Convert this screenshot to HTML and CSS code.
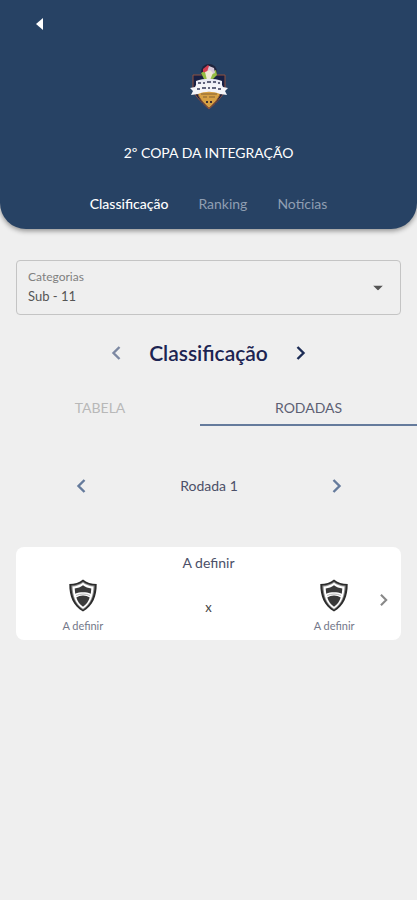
FILE: index.html
```
<!DOCTYPE html>
<html lang="pt-BR">
<head>
  <meta charset="UTF-8" />
  <meta name="viewport" content="width=device-width, initial-scale=1" />
  <title>2º Copa da Integração</title>
  <link rel="stylesheet" href="styles.css">
</head>
<body>
  <svg class="symbols" aria-hidden="true">
    <symbol id="chevron-left" viewBox="0 0 10 16">
      <path d="M8.5 2 L2.5 8 L8.5 14" fill="none" stroke="currentColor" stroke-width="2.4" />
    </symbol>
    <symbol id="chevron-right" viewBox="0 0 10 16">
      <path d="M1.5 2 L7.5 8 L1.5 14" fill="none" stroke="currentColor" stroke-width="2.4" />
    </symbol>
    <symbol id="shield" viewBox="0 0 28 33">
      <path d="M14 .5 C10.500 3.500 5.500 5 .3 5 C.2 17 4 27 14 32.500 C24 27 27.800 17 27.700 5 C22.500 5 17.500 3.500 14 .5z" fill="#2b2b2b" />
      <path d="M14 2.500 C11 5 7 6.300 2.300 6.600 C2.600 16 5.500 25.500 14 30.700 C22.500 25.500 25.400 16 25.700 6.600 C21 6.300 17 5 14 2.500z" fill="#8d8d8d" />
      <path d="M14 3.800 C11 6 7.500 7.300 3.500 7.600 C3.800 16.500 6.500 25 14 29.700 C21.500 25 24.200 16.500 24.500 7.600 C20.500 7.300 17 6 14 3.800z" fill="#fff" />
      <path d="M14 6.300 C11.500 8.300 8.800 9.200 5.700 9.500 L6.200 14.700 C11 12.800 17 12.800 21.800 14.700 L22.300 9.500 C19.200 9.200 16.500 8.300 14 6.300z" fill="#3a3a3a" />
      <path d="M7.300 18.500 C11 15.800 17 15.800 20.700 18.500 C19.500 22.500 17.500 25.300 14 27.800 C10.500 25.300 8.500 22.500 7.300 18.500z" fill="#3a3a3a" />
      <path d="M7 16.500 C11 14.600 17 14.600 21 16.500" fill="none" stroke="#999" stroke-width=".7" />
    </symbol>
  </svg>

  <header class="header">
    <button class="back-btn" type="button" aria-label="Voltar">
      <svg width="7" height="12" viewBox="0 0 7 12"><path d="M7 0v12L0 6z" fill="#fff" /></svg>
    </button>

    <svg class="crest" viewBox="0 0 40 48" aria-hidden="true">
      <path d="M4 12h32v13c0 6-7 13-16 21C11 38 4 31 4 25z" fill="#182044" stroke="#91503f" stroke-width="1" />
      <path d="M8 28h24c-1 6-6 12-12 17C14 40 9 34 8 28z" fill="#d6a044" stroke="#8b5b35" />
      <circle cx="20" cy="9" r="8" fill="#20243c" />
      <path d="M12 10l5-3 4 3 6-3 1 5-4 4H15z" fill="#94bd43" />
      <path d="M14 6l5-4 3 3-3 5-5-1z" fill="#d53d50" />
      <path d="M20 3l5 2 1 5-5 2-3-3z" fill="#d8c8d8" />
      <path d="M16 9l5-2 3 3-3 7h-3z" fill="#f0e9d7" />
      <path d="M7 18c8-3 18-3 26 0v6H7z" fill="#e9eaf3" />
      <path d="M1 25l5-1 1-2c8-2 18-2 26 0l1 2 5 1-3 3 2 4-7-1c-7-3-15-3-22 0l-7 1 2-4z" fill="#f4f4f8" />
      <path d="M9 20h3m2 0h2m2-1h4m2 0h3m2 1h2M8 26h3m2-1h4m2 0h2m2 0h4m2 1h3" stroke="#343957" stroke-width="1.500" />
      <path d="M12 31h16M14 34h4m2 0h6" stroke="#a07639" stroke-width="1.300" />
      <path d="M17 39h2m2 0h2" stroke="#3d3031" stroke-width="2" />
    </svg>

    <h1 class="title">2º COPA DA INTEGRAÇÃO</h1>

    <nav class="menu">
      <a class="menu-link active" href="#classificacao">Classificação</a>
      <a class="menu-link" href="#ranking">Ranking</a>
      <a class="menu-link" href="#noticias">Notícias</a>
    </nav>
  </header>

  <main>
    <div class="field">
      <label for="categoria">Categorias</label>
      <select id="categoria">
        <option>Sub - 11</option>
      </select>
      <svg class="caret" viewBox="0 0 10 5" aria-hidden="true"><path d="M0 0h10L5 5z" fill="#555" /></svg>
    </div>

    <div class="phase" id="classificacao">
      <button class="icon-btn muted" type="button" aria-label="Fase anterior">
        <svg class="chevron"><use href="#chevron-left" /></svg>
      </button>
      <h2>Classificação</h2>
      <button class="icon-btn" type="button" aria-label="Próxima fase">
        <svg class="chevron"><use href="#chevron-right" /></svg>
      </button>
    </div>

    <div class="tabs" role="tablist">
      <button class="tab" type="button" role="tab" aria-selected="false">TABELA</button>
      <button class="tab selected" type="button" role="tab" aria-selected="true">RODADAS</button>
    </div>

    <div class="round">
      <button class="icon-btn" type="button" aria-label="Rodada anterior">
        <svg class="chevron"><use href="#chevron-left" /></svg>
      </button>
      <span>Rodada 1</span>
      <button class="icon-btn" type="button" aria-label="Próxima rodada">
        <svg class="chevron"><use href="#chevron-right" /></svg>
      </button>
    </div>

    <a class="match" href="#partida">
      <span class="match-date">A definir</span>
      <span class="teams">
        <span class="team">
          <svg class="shield"><use href="#shield" /></svg>
          <span>A definir</span>
        </span>
        <span class="versus">x</span>
        <span class="team">
          <svg class="shield"><use href="#shield" /></svg>
          <span>A definir</span>
        </span>
      </span>
      <svg class="match-arrow"><use href="#chevron-right" /></svg>
    </a>
  </main>
</body>
</html>
```
FILE: styles.css
```
* {
  box-sizing: border-box;
}
body {
  margin: 0;
  min-height: 100vh;
  background: #efefef;
  font-family: Lato, "Liberation Sans", sans-serif;
  font-size: 14px;
  line-height: 20px;
  color: #4c5068;
}
button {
  border: none;
  background: none;
  font-family: inherit;
  cursor: pointer;
}
a {
  text-decoration: none;
}
svg {
  display: block;
}
.symbols {
  display: none;
}
.header {
  display: flex;
  flex-direction: column;
  align-items: center;
  padding: 12px 24px 15px;
  background: #274264;
  border-radius: 0 0 26px 26px;
  box-shadow: 0 2px 5px rgba(0, 0, 0, 0.4);
}
.back-btn {
  align-self: flex-start;
  padding: 6px 12px;
}
.crest {
  width: 40px;
  height: 48px;
  margin-top: 27px;
}
.title {
  margin: 32px 0 0;
  font-size: 14px;
  font-weight: 400;
  line-height: 20px;
  color: #fff;
}
.menu {
  display: flex;
  gap: 30px;
  margin-top: 31px;
}
.menu-link {
  color: #8f9eb2;
}
.menu-link.active {
  color: #fff;
  font-weight: 500;
}
.field {
  position: relative;
  margin: 31px 16px 0;
}
.field label {
  position: absolute;
  top: 9px;
  left: 12px;
  font-size: 12px;
  line-height: 16px;
  color: #808080;
}
.field select {
  display: block;
  width: 100%;
  padding: 25px 32px 8px 11px;
  border: 1px solid #c4c4c4;
  border-radius: 4px;
  background: none;
  appearance: none;
  font-family: inherit;
  font-size: 13px;
  line-height: 20px;
  color: #555;
}
.caret {
  position: absolute;
  top: 50%;
  right: 18px;
  width: 10px;
  height: 5px;
  transform: translateY(-50%);
  pointer-events: none;
}
.icon-btn {
  padding: 4px 8px;
  color: #657b9c;
}
.chevron {
  width: 10px;
  height: 16px;
}
.phase {
  display: flex;
  justify-content: center;
  align-items: center;
  gap: 20px;
  margin-top: 24px;
}
.phase h2 {
  margin: 0;
  font-size: 21px;
  font-weight: 600;
  line-height: 28px;
  color: #1c2452;
}
.phase .icon-btn {
  color: #1c2c55;
}
.phase .icon-btn.muted {
  color: #7c88a2;
}
.tabs {
  display: grid;
  grid-template-columns: 12fr 13fr;
  margin-top: 24px;
}
.tab {
  padding: 7px 0 6px;
  border-bottom: 2px solid transparent;
  font-size: 14px;
  line-height: 20px;
  color: #b8b8b8;
}
.tab.selected {
  border-color: #657b9c;
  color: #5c6073;
}
.round {
  display: flex;
  justify-content: space-between;
  align-items: center;
  margin: 48px 67px 0 68px;
}
.match {
  position: relative;
  display: block;
  margin: 49px 16px 0;
  padding: 6px 4px;
  border-radius: 8px;
  background: #fff;
  text-align: center;
  color: #4c5068;
}
.match-date {
  display: block;
}
.teams {
  display: grid;
  grid-template-columns: repeat(3, 1fr);
  align-items: center;
  margin-top: 6px;
}
.team {
  display: flex;
  flex-direction: column;
  align-items: center;
  gap: 6px;
  font-size: 11px;
  line-height: 16px;
  color: #74788a;
}
.shield {
  width: 28px;
  height: 33px;
}
.versus {
  font-size: 13px;
  color: #444;
}
.match-arrow {
  position: absolute;
  top: 46px;
  right: 12px;
  width: 10px;
  height: 14px;
  color: #888;
}
```
